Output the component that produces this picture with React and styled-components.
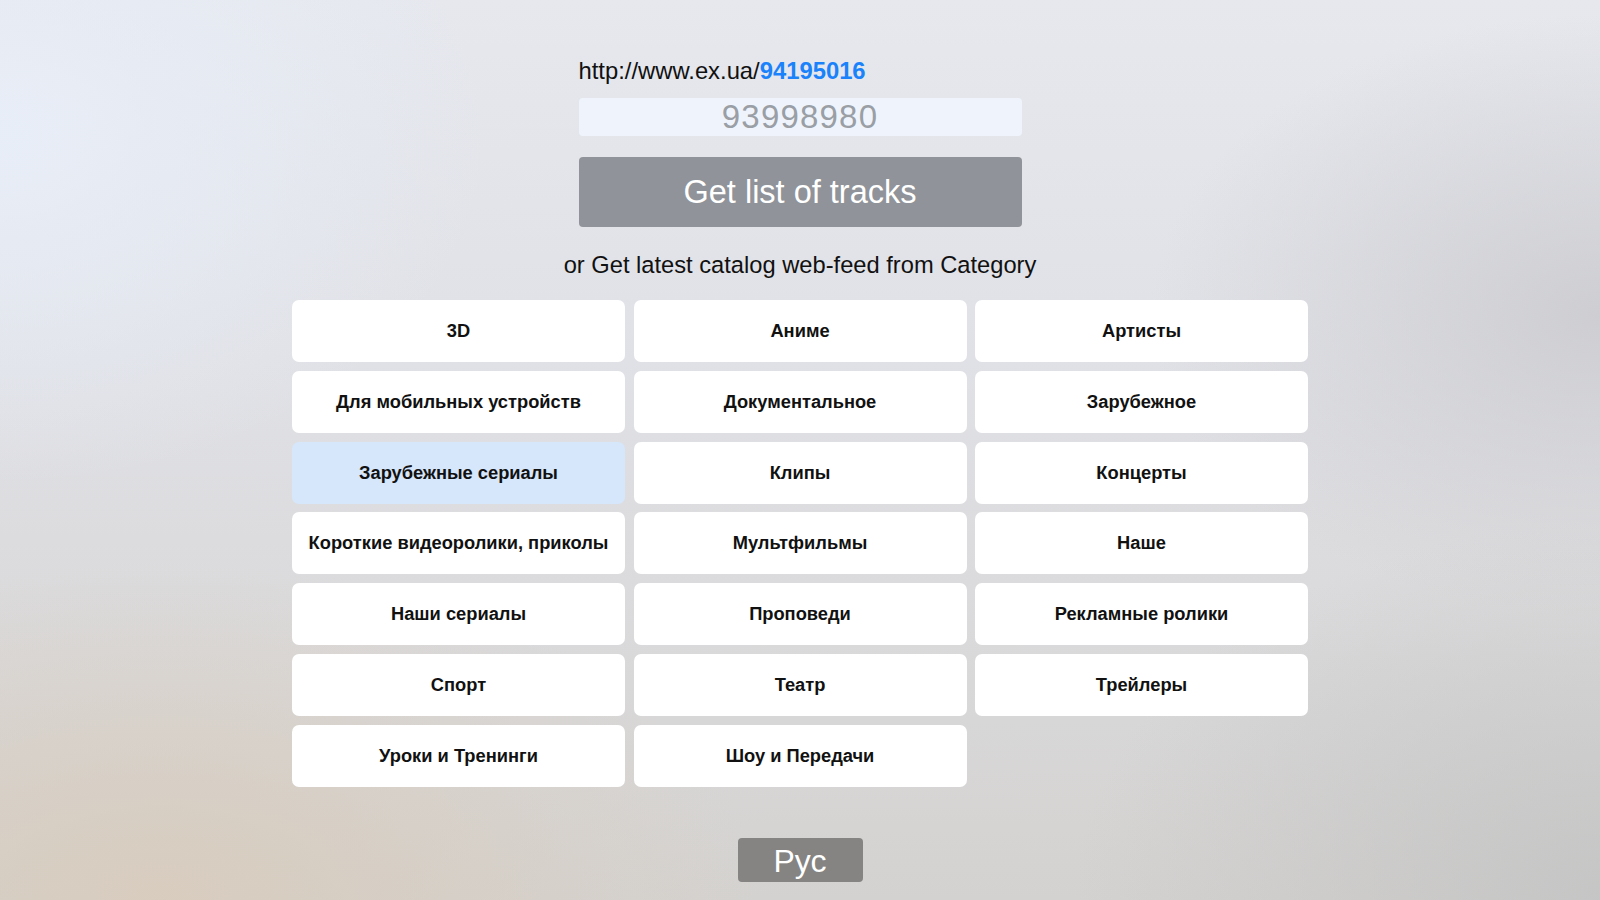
import React from 'react'
import styled, { createGlobalStyle } from 'styled-components'

const GlobalStyle = createGlobalStyle`
  html, body {
    margin: 0;
    padding: 0;
    height: 100%;
  }
  body {
    font-family: "Liberation Sans", Arial, sans-serif;
    color: #111;
    background: #dcdde1;
  }
`

const categories = [
  '3D',
  'Аниме',
  'Артисты',
  'Для мобильных устройств',
  'Документальное',
  'Зарубежное',
  'Зарубежные сериалы',
  'Клипы',
  'Концерты',
  'Короткие видеоролики, приколы',
  'Мультфильмы',
  'Наше',
  'Наши сериалы',
  'Проповеди',
  'Рекламные ролики',
  'Спорт',
  'Театр',
  'Трейлеры',
  'Уроки и Тренинги',
  'Шоу и Передачи',
]

const Page = styled.main`
  position: relative;
  width: 1600px;
  height: 900px;
  overflow: hidden;
  display: flex;
  flex-direction: column;
  align-items: center;
  padding-top: 58px;
  box-sizing: border-box;
  background:
    radial-gradient(ellipse 700px 500px at 0% 15%, rgba(232, 238, 248, 0.95), rgba(232, 238, 248, 0) 70%),
    radial-gradient(ellipse 800px 450px at 10% 100%, rgba(216, 204, 189, 0.95), rgba(216, 204, 189, 0) 75%),
    radial-gradient(ellipse 700px 500px at 100% 100%, rgba(196, 196, 196, 0.9), rgba(196, 196, 196, 0) 75%),
    radial-gradient(ellipse 600px 400px at 100% 35%, rgba(204, 204, 208, 0.9), rgba(204, 204, 208, 0) 75%),
    linear-gradient(180deg, #e6e8ee 0%, #e0e1e6 40%, #d4d2d0 100%);
`

const Form = styled.section`
  width: 443px;
  display: flex;
  flex-direction: column;
`

const UrlLine = styled.div`
  font-size: 23.8px;
  line-height: 26px;
  color: #111;
  margin-bottom: 14px;
  span {
    color: #1a82fb;
    font-weight: 700;
  }
`

const IdInput = styled.div`
  height: 38px;
  border-radius: 4px;
  background: #eff4fc;
  color: #9a9ea5;
  font-size: 33px;
  line-height: 38px;
  text-align: center;
  letter-spacing: 1.2px;
`

const GetButton = styled.button`
  margin-top: 21px;
  height: 70px;
  border: none;
  border-radius: 4px;
  background: #909399;
  color: #fff;
  font-family: inherit;
  font-size: 32.5px;
  cursor: pointer;
`

const Subtitle = styled.p`
  margin: 25px 0 22px;
  font-size: 23.7px;
  line-height: 26px;
  color: #111;
`

const Grid = styled.div`
  width: 1016px;
  display: grid;
  grid-template-columns: repeat(3, 1fr);
  grid-auto-rows: 62px;
  column-gap: 8.5px;
  row-gap: 8.8px;
`

const Card = styled.button`
  border: none;
  border-radius: 7px;
  background: ${(p) => (p.$active ? '#d6e6fb' : '#ffffff')};
  color: #111;
  font-family: inherit;
  font-weight: 700;
  font-size: 18.3px;
  display: flex;
  align-items: center;
  justify-content: center;
  padding: 0;
  cursor: pointer;
`

const LangButton = styled.button`
  margin-top: 51px;
  width: 125px;
  height: 44px;
  border: none;
  border-radius: 4px;
  background: #858483;
  color: #fff;
  font-family: inherit;
  font-size: 32px;
  line-height: 44px;
  cursor: pointer;
`

const App = () => {
  return (
    <>
      <GlobalStyle />
      <Page>
        <Form>
          <UrlLine>
            http://www.ex.ua/<span>94195016</span>
          </UrlLine>
          <IdInput>93998980</IdInput>
          <GetButton>Get list of tracks</GetButton>
        </Form>
        <Subtitle>or Get latest catalog web-feed from Category</Subtitle>
        <Grid>
          {categories.map((c) => (
            <Card key={c} $active={c === 'Зарубежные сериалы'}>
              {c}
            </Card>
          ))}
        </Grid>
        <LangButton>Рус</LangButton>
      </Page>
    </>
  )
}

export default App
